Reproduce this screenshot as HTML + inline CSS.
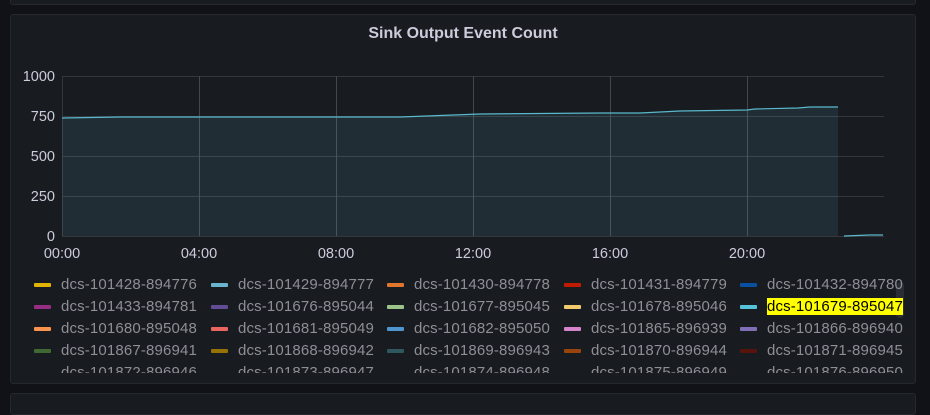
<!DOCTYPE html>
<html><head><style>
body{margin:0;width:930px;height:402px;background:#111217;overflow:hidden;font-family:"Liberation Sans",sans-serif;position:relative}
.p{position:absolute;background:#181b1f;border:1px solid #25282d;border-radius:3px}
.t{position:absolute;top:25px;left:0;width:926px;text-align:center;color:#ccccdc;font-size:16px;font-weight:bold}
.lg{position:absolute;left:0;top:274px;width:912px;height:99px;overflow:hidden}
.it{position:absolute;font-size:15px;letter-spacing:0.15px;color:#8e8e98;white-space:nowrap;line-height:18px}
.it i{position:absolute;left:-27px;top:7px;width:17px;height:4px;border-radius:1px}
.hl{background:#ffff00;color:#000}
svg text{font-family:"Liberation Sans",sans-serif;font-size:14.5px;fill:#ccccdc}
</style></head><body>
<div class="p" style="left:10px;top:-10px;width:904px;height:13px"></div>
<div class="p" style="left:10px;top:14px;width:904px;height:368px"></div>
<div class="p" style="left:10px;top:393px;width:904px;height:20px"></div>
<div class="t">Sink Output Event Count</div>
<svg style="position:absolute;left:0;top:0" width="930" height="270">
<g stroke="#34373c" stroke-width="1">
<line x1="62" y1="76.5" x2="884" y2="76.5"/><line x1="62" y1="116.5" x2="884" y2="116.5"/><line x1="62" y1="156.5" x2="884" y2="156.5"/><line x1="62" y1="196.5" x2="884" y2="196.5"/><line x1="62" y1="236.5" x2="884" y2="236.5"/>
<line x1="62.5" y1="76" x2="62.5" y2="236"/><line x1="199.5" y1="76" x2="199.5" y2="236" stroke="#44474c"/><line x1="336.5" y1="76" x2="336.5" y2="236" stroke="#44474c"/><line x1="473.5" y1="76" x2="473.5" y2="236" stroke="#44474c"/><line x1="610.5" y1="76" x2="610.5" y2="236" stroke="#44474c"/><line x1="747.5" y1="76" x2="747.5" y2="236" stroke="#44474c"/>
</g>
<path d="M62 118 L120 117 L400 117 L480 114 L600 113 L640 113 L680 111 L747 110 L755 109 L798 108 L810 107 L838 107 L838 236 L62 236Z" fill="#5ab8cc" fill-opacity="0.12"/>
<path d="M62 118 L120 117 L400 117 L480 114 L600 113 L640 113 L680 111 L747 110 L755 109 L798 108 L810 107 L838 107" fill="none" stroke="#5ab8cc" stroke-width="1.2"/>
<path d="M844 236 L870 235 L883 235" fill="none" stroke="#5ab8cc" stroke-width="1.2"/>
<g text-anchor="end"><text x="55" y="81">1000</text><text x="55" y="121">750</text><text x="55" y="161">500</text><text x="55" y="201">250</text><text x="55" y="241">0</text></g>
<g text-anchor="middle"><text x="62" y="258">00:00</text><text x="199" y="258">04:00</text><text x="336" y="258">08:00</text><text x="473" y="258">12:00</text><text x="610" y="258">16:00</text><text x="747" y="258">20:00</text></g>
</svg>
<div style="position:absolute;left:896px;top:282px;width:8px;height:36px;background:#2a2d33;border-radius:4px"></div>
<div class="lg">
<div class="it" style="left:61px;top:2px"><i style="background:#e0b400"></i>dcs-101428-894776</div>
<div class="it" style="left:238px;top:2px"><i style="background:#6ab5cc"></i>dcs-101429-894777</div>
<div class="it" style="left:414px;top:2px"><i style="background:#e0752d"></i>dcs-101430-894778</div>
<div class="it" style="left:591px;top:2px"><i style="background:#bf1b00"></i>dcs-101431-894779</div>
<div class="it" style="left:767px;top:2px"><i style="background:#0a50a1"></i>dcs-101432-894780</div>
<div class="it" style="left:61px;top:24px"><i style="background:#962d82"></i>dcs-101433-894781</div>
<div class="it" style="left:238px;top:24px"><i style="background:#614d93"></i>dcs-101676-895044</div>
<div class="it" style="left:414px;top:24px"><i style="background:#9ac48a"></i>dcs-101677-895045</div>
<div class="it" style="left:591px;top:24px"><i style="background:#f2c96d"></i>dcs-101678-895046</div>
<div class="it" style="left:767px;top:24px"><i style="background:#56c2d9"></i><span class="hl">dcs-101679-895047</span></div>
<div class="it" style="left:61px;top:46px"><i style="background:#f9934e"></i>dcs-101680-895048</div>
<div class="it" style="left:238px;top:46px"><i style="background:#ea6460"></i>dcs-101681-895049</div>
<div class="it" style="left:414px;top:46px"><i style="background:#5195ce"></i>dcs-101682-895050</div>
<div class="it" style="left:591px;top:46px"><i style="background:#d683ce"></i>dcs-101865-896939</div>
<div class="it" style="left:767px;top:46px"><i style="background:#806eb7"></i>dcs-101866-896940</div>
<div class="it" style="left:61px;top:68px"><i style="background:#3f6833"></i>dcs-101867-896941</div>
<div class="it" style="left:238px;top:68px"><i style="background:#967302"></i>dcs-101868-896942</div>
<div class="it" style="left:414px;top:68px"><i style="background:#2f575e"></i>dcs-101869-896943</div>
<div class="it" style="left:591px;top:68px"><i style="background:#99440a"></i>dcs-101870-896944</div>
<div class="it" style="left:767px;top:68px"><i style="background:#58140c"></i>dcs-101871-896945</div>
<div class="it" style="left:61px;top:90px">dcs-101872-896946</div>
<div class="it" style="left:238px;top:90px">dcs-101873-896947</div>
<div class="it" style="left:414px;top:90px">dcs-101874-896948</div>
<div class="it" style="left:591px;top:90px">dcs-101875-896949</div>
<div class="it" style="left:767px;top:90px">dcs-101876-896950</div>
</div>
</body></html>
